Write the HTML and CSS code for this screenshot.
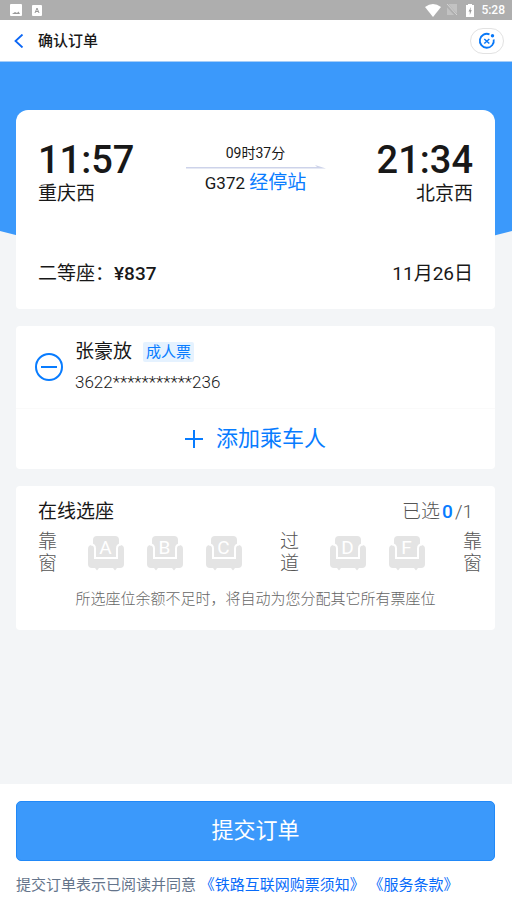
FILE: index.html
```html
<!DOCTYPE html>
<html lang="zh-CN">
<head>
<meta charset="utf-8">
<meta name="viewport" content="width=device-width, initial-scale=1">
<title>确认订单</title>
<link rel="stylesheet" href="styles.css">
</head>
<body>
<svg class="defs" width="0" height="0" aria-hidden="true">
  <symbol id="seat" viewBox="0 0 36 35">
    <path fill="#e4e4e4" d="M9 0h18q4 0 4 4v5h1q4 0 4 4v15q0 4-4 4h-3l-2 2.500-2-2.500H11l-2 2.500L7 32H4q-4 0-4-4V13q0-4 4-4h1V4q0-4 4-4z"/>
    <path fill="none" stroke="#fff" stroke-width="2" d="M3 8.500q4 0 4 4V22h22v-9.500q0-4 4-4"/>
  </symbol>
</svg>
<div class="status">
  <svg width="12" height="12" viewBox="0 0 12 12"><rect width="12" height="12" rx="1" fill="#fff"/><path d="M2 10h8L8.500 7.500 7 9 5 8z" fill="#999"/></svg>
  <svg width="10" height="11" viewBox="0 0 10 11"><rect width="10" height="11" rx="1" fill="#fff"/><path d="M3 8l2-5 2 5M4 6.500h2" fill="none" stroke="#999"/></svg>
  <span class="spacer"></span>
  <svg width="16" height="13" viewBox="0 0 16 13"><path d="M0 3Q8-3 16 3L8 13z" fill="#fff"/></svg>
  <svg class="sim" width="12" height="12" viewBox="0 0 12 12"><path d="M3 0h8v11H1V2z" fill="#c2c2c2"/><path d="M0 0l11 12" stroke="#aeaeae" stroke-width="3"/><path d="M1 0l10 11" stroke="#d4d4d4"/></svg>
  <svg class="battery" width="8" height="13" viewBox="0 0 8 13"><path d="M2 0h4v1h2v12H0V1h2z" fill="#fff"/><path d="M5 3L2.500 7.500h1.300V11L5.700 6H4.500z" fill="#999"/></svg>
  <span class="clock">5:28</span>
</div>
<header class="header">
  <button class="back" type="button" aria-label="返回"><svg width="10" height="14" viewBox="0 0 10 14"><path d="M8.500.5L1.500 7l7 6.500" fill="none" stroke="#0b66f5" stroke-width="1.800"/></svg></button>
  <h1>确认订单</h1>
  <button class="capsule" type="button" aria-label="关闭"><svg width="18" height="18" viewBox="0 0 18 18" fill="none" stroke="#0878f8"><path d="M11.500 2.300A7 7 0 1 0 15.700 7.500" stroke-width="1.800"/><path d="M6.300 7l5 4.500M11.300 7l-5 4.500" stroke-width="1.500"/><circle cx="14.500" cy="3.700" r="1.700" fill="#0878f8" stroke="none"/></svg></button>
</header>
<main class="content">
  <section class="card trip">
    <div class="route">
      <div class="stop"><strong>11:57</strong><span>重庆西</span></div>
      <div class="journey">
        <span class="duration">09时37分</span>
        <svg class="arrow" viewBox="0 0 140 4" preserveAspectRatio="none"><path d="M0 2h131l-2-2 11 3.500H0z" fill="#cdd3ea"/></svg>
        <span class="train">G372 <a href="#stops">经停站</a></span>
      </div>
      <div class="stop end"><strong>21:34</strong><span>北京西</span></div>
    </div>
    <div class="fare"><span>二等座：<b>¥837</b></span><span>11月26日</span></div>
  </section>
  <section class="card passengers">
    <div class="passenger">
      <button type="button" class="remove" aria-label="移除乘车人"><svg width="28" height="28" viewBox="0 0 28 28" fill="none" stroke="#087cff" stroke-width="2"><circle cx="14" cy="14" r="13"/><path d="M6 14h16"/></svg></button>
      <div class="person">
        <div class="name">张豪放<span class="tag">成人票</span></div>
        <div class="idno">3622***********236</div>
      </div>
    </div>
    <button type="button" class="add"><svg width="18" height="18" viewBox="0 0 18 18" stroke="#087cff" stroke-width="2"><path d="M0 9h18M9 0v18"/></svg>添加乘车人</button>
  </section>
  <section class="card seats">
    <div class="seat-head"><h2>在线选座</h2><span class="chosen">已选<b>0</b>/1</span></div>
    <div class="seat-row">
      <span class="side">靠窗</span>
      <div class="group">
        <button type="button" class="seat"><svg><use href="#seat"/></svg><span>A</span></button>
        <button type="button" class="seat"><svg><use href="#seat"/></svg><span>B</span></button>
        <button type="button" class="seat"><svg><use href="#seat"/></svg><span>C</span></button>
      </div>
      <span class="side">过道</span>
      <div class="group">
        <button type="button" class="seat"><svg><use href="#seat"/></svg><span>D</span></button>
        <button type="button" class="seat"><svg><use href="#seat"/></svg><span>F</span></button>
      </div>
      <span class="side">靠窗</span>
    </div>
    <p class="hint">所选座位余额不足时，将自动为您分配其它所有票座位</p>
  </section>
</main>
<footer class="footer">
  <button type="button" class="submit">提交订单</button>
  <p class="terms">提交订单表示已阅读并同意 <a href="#notice">《铁路互联网购票须知》</a> <a href="#terms">《服务条款》</a></p>
</footer>
</body>
</html>
```
FILE: styles.css
```css
* { box-sizing: border-box; }
body {
  margin: 0;
  min-height: 100vh;
  display: flex;
  flex-direction: column;
  background: #f3f5f7;
  color: #181818;
  font-family: Roboto, "Noto Sans CJK SC", sans-serif;
  font-size: 19px;
  line-height: 24px;
}
h1, h2, p { margin: 0; font-weight: 400; }
button { padding: 0; border: 0; background: none; font: inherit; color: inherit; }
a { color: #087cff; text-decoration: none; }
svg { display: block; }
.defs { position: absolute; }

.status {
  display: flex;
  align-items: center;
  gap: 6px;
  height: 20px;
  padding: 0 7px 0 10px;
  background: #aeaeae;
  color: #fff;
}
.status svg:nth-child(2) { margin-left: 4px; }
.sim { margin-left: -1px; }
.battery { margin: 0 1px 0 2px; }
.spacer { flex: 1; }
.clock { font-size: 12px; font-weight: 500; line-height: 20px; }

.header {
  display: flex;
  align-items: center;
  height: 42px;
  padding: 0 8px 0 14px;
  background: #fff;
  border-bottom: 1px solid #a5cdf8;
}
.header h1 { flex: 1; margin-left: 14px; font-size: 15px; font-weight: 500; }
.capsule {
  display: grid;
  place-items: center;
  width: 34px;
  height: 26px;
  border: 1px solid #e2e2e2;
  border-radius: 13px;
}

.content {
  position: relative;
  z-index: 0;
  flex: 1;
  display: flex;
  flex-direction: column;
  gap: 17px;
  padding: 48px 17px 16px 16px;
}
.content::before {
  content: "";
  position: absolute;
  z-index: -1;
  inset: 0 0 auto;
  height: 190px;
  background: #3b99fb;
  clip-path: polygon(0 0, 100% 0, 100% 169px, 90% 182px, 10% 182px, 0 169px);
}
.card { background: #fff; border-radius: 4px; }

.trip { padding: 28px 22px; border-radius: 12px 12px 4px 4px; padding-bottom: 23px; }
.route { display: flex; justify-content: space-between; }
.stop { display: flex; flex-direction: column; }
.stop strong { font-size: 38px; font-weight: 500; line-height: 44px; }
.end { text-align: right; }
.journey {
  flex: 0 1 140px;
  display: flex;
  flex-direction: column;
  align-items: center;
  padding-top: 5px;
}
.duration { font-size: 14px; line-height: 20px; }
.arrow { width: 100%; height: 4px; margin: 2px 0; }
.train { font-size: 17px; }
.train a { font-size: 19px; }
.fare { display: flex; justify-content: space-between; margin-top: 56px; }
.fare b { font-weight: 500; }

.passenger {
  display: flex;
  align-items: center;
  gap: 12px;
  padding: 14px 19px;
  border-bottom: 1px solid #fafafa;
}
.person { display: flex; flex-direction: column; gap: 6px; }
.name { display: flex; align-items: center; gap: 11px; }
.tag {
  padding: 0 3px;
  border-radius: 2px;
  background: #e5f2ff;
  color: #087cff;
  font-size: 15px;
  line-height: 20px;
}
.idno { font-size: 17px; font-weight: 300; }
.add {
  display: flex;
  align-items: center;
  justify-content: center;
  gap: 13px;
  width: 100%;
  height: 60px;
  color: #087cff;
  font-size: 22px;
}

.seats { padding: 14px 22px 19px; }
.seat-head { display: flex; justify-content: space-between; }
.seat-head h2 { font-size: 19px; }
.chosen { color: #555; font-weight: 300; }
.chosen b { margin: 0 2px; color: #087cff; font-weight: 500; }
.seat-row {
  display: flex;
  align-items: center;
  justify-content: space-between;
  margin: 7px -9px 0 0;
  color: #555;
}
.side { width: 19px; line-height: 22px; font-weight: 300; }
.group { display: flex; gap: 23px; padding-right: 8px; }
.seat { display: grid; width: 36px; height: 35px; }
.seat > * { grid-area: 1 / 1; }
.seat svg { width: 36px; height: 35px; }
.seat span { color: #fff; font-size: 19px; line-height: 24px; }
.hint { margin-top: 12px; color: #666; font-size: 15px; font-weight: 300; text-align: center; }

.footer { padding: 17px 17px 13px 16px; background: #fff; }
.submit {
  display: block;
  width: 100%;
  height: 60px;
  border: 1px solid #2189f8;
  border-radius: 5px;
  background: #3b99fb;
  color: #fff;
  font-size: 22px;
}
.terms { margin-top: 12px; color: #64748b; font-size: 15px; }
.terms a { color: #076bfa; }
```
